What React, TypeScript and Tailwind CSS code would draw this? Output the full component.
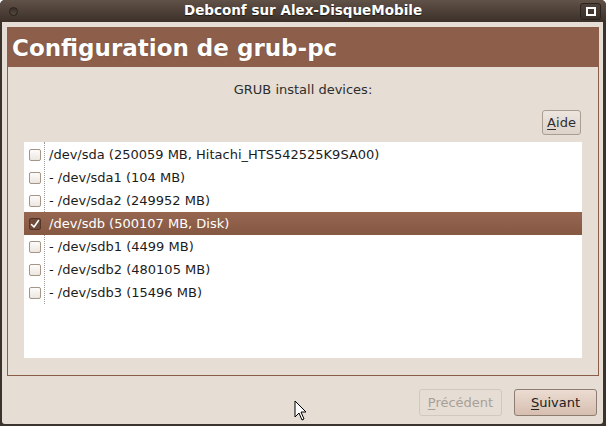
type Device = {
  label: string;
  checked: boolean;
};

const DEVICES: Device[] = [
  { label: "/dev/sda (250059 MB, Hitachi_HTS542525K9SA00)", checked: false },
  { label: "- /dev/sda1 (104 MB)", checked: false },
  { label: "- /dev/sda2 (249952 MB)", checked: false },
  { label: "/dev/sdb (500107 MB, Disk)", checked: true },
  { label: "- /dev/sdb1 (4499 MB)", checked: false },
  { label: "- /dev/sdb2 (480105 MB)", checked: false },
  { label: "- /dev/sdb3 (15496 MB)", checked: false },
];

const FONT = { fontFamily: '"DejaVu Sans", "Liberation Sans", sans-serif' };

function Cursor() {
  return (
    <svg className="absolute left-[294px] top-[400px]" width="14" height="22" viewBox="0 0 14 22">
      <path d="M1 1 L1 17 L5 13 L8 20 L10 19 L7 12 L12 12 Z" fill="#fff" stroke="#000" strokeWidth="1" strokeLinejoin="miter" />
    </svg>
  );
}

export default function App() {
  return (
    <div className="relative w-[606px] h-[426px] flex flex-col overflow-hidden rounded-t-[5px] bg-[#3a322c]" style={FONT}>
      {/* Title bar */}
      <div className="relative h-[22px] shrink-0 flex items-center justify-center bg-gradient-to-b from-[#615248] to-[#3c3029]">
        <div className="absolute left-[9px] top-[7px] w-[9px] h-[9px] rounded-full border border-[#2a221d] bg-gradient-to-b from-[#3a302a] to-[#56483e]" />
        <span className="text-[13.5px] font-bold text-white leading-none [text-shadow:0_1px_1px_#1d1712]">Debconf sur Alex-DisqueMobile</span>
        <div className="absolute left-[580px] top-[3px] w-[21px] h-[17px] rounded-[3px] border border-[#2b231e] bg-gradient-to-b from-[#4e4139] to-[#3a2f28] flex items-center justify-center">
          <div className="w-[10px] h-[9px] border-2 border-white" />
        </div>
      </div>

      {/* Window body */}
      <div className="flex-1 flex flex-col ml-[2px] mr-[3px] mb-[2px] bg-[#e6ddd4] rounded-b-[3px]">
        <div className="mt-[5px] ml-[5px] mr-[4px] h-[349px] flex flex-col border border-[#8b5e49]">
          <div className="h-[39px] shrink-0 bg-[#8d5f4a] flex items-center pl-[4px] pt-[1px]">
            <span className="text-[23px] font-bold text-white leading-none [text-shadow:0_0_1px_#5b3a2c]">Configuration de grub-pc</span>
          </div>
          <div className="flex-1 flex flex-col px-[16px]">
            <div className="mt-[15px] text-center text-[13px] text-[#2e2e2e] leading-[16px]">GRUB install devices:</div>
            <div className="flex justify-end mt-[12px] mr-[1px]">
              <button className="w-[39px] h-[25px] rounded-[3px] border border-[#aa9d92] bg-gradient-to-b from-[#ede6df] to-[#ddd3ca] text-[13px] text-[#2e2e2e] leading-none">
                <span className="underline underline-offset-2">A</span>ide
              </button>
            </div>
            <div className="mt-[7px] h-[216px] bg-white relative pt-[1px]">
              <div className="absolute left-[20px] top-0 h-[162px] border-l border-dotted border-[#9a9a9a]" />
              {DEVICES.map((d) => (
                <div
                  key={d.label}
                  className={`relative h-[23px] flex items-center ${d.checked ? "bg-gradient-to-b from-[#966651] to-[#855842] text-white" : "text-[#1c1c1c]"}`}
                >
                  <div className="w-[25px] pl-[5px]">
                    {d.checked ? (
                      <div className="w-[12px] h-[12px] rounded-[2px] border border-[#4f3629] bg-[#6f4a39] flex items-center justify-center">
                        <svg width="10" height="10" viewBox="0 0 10 10">
                          <path d="M1.5 5.5 L4 8 L8.5 1.5" fill="none" stroke="#fff" strokeWidth="1.6" strokeLinecap="round" strokeLinejoin="round" />
                        </svg>
                      </div>
                    ) : (
                      <div className="w-[12px] h-[12px] rounded-[2px] border border-[#a49586] bg-gradient-to-b from-[#fdfcfb] to-[#ece6e0]" />
                    )}
                  </div>
                  <span className="text-[13px] leading-none whitespace-nowrap">{d.label}</span>
                </div>
              ))}
            </div>
          </div>
        </div>

        {/* Bottom buttons */}
        <div className="flex justify-end gap-[12px] mt-[13px] mr-[6px]">
          <button className="w-[83px] h-[27px] rounded-[3px] border border-[#d3c8be] bg-[#e6ddd4] text-[13px] text-[#a8a098] leading-none">
            <span className="underline underline-offset-2">P</span>récédent
          </button>
          <button className="w-[83px] h-[27px] rounded-[3px] border border-[#8d7d72] bg-gradient-to-b from-[#ecdcd2] to-[#d6beaf] text-[13px] text-[#202020] leading-none">
            <span className="underline underline-offset-2">S</span>uivant
          </button>
        </div>
      </div>

      <Cursor />
    </div>
  );
}
